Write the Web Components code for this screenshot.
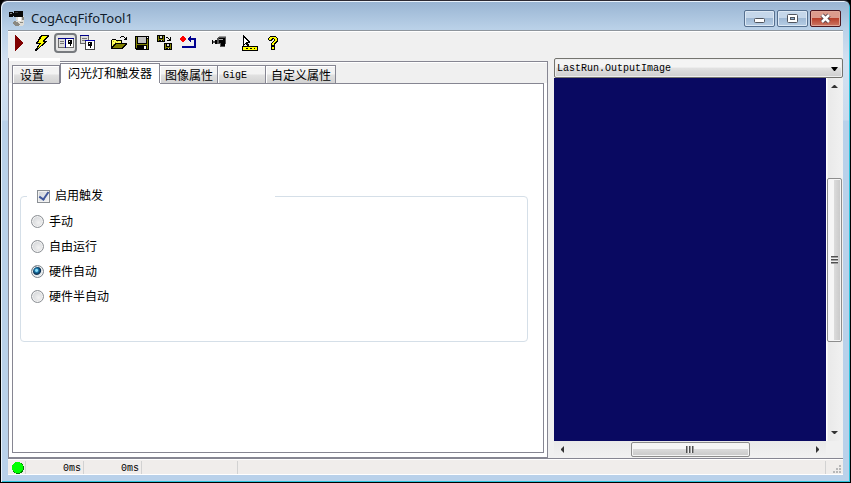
<!DOCTYPE html>
<html lang="zh-CN">
<head>
<meta charset="utf-8">
<title>CogAcqFifoTool1</title>
<style>
html,body{height:100%;margin:0;background:#000;overflow:hidden}
body{font:12px/16px "Liberation Sans","Noto Sans CJK SC",sans-serif;color:#000}
</style>
</head>
<body>
<app-window>
  <title-bar slot="title">CogAcqFifoTool1</title-bar>
  <tool-bar slot="tools"></tool-bar>
  <tab-panel slot="left"><trigger-group></trigger-group></tab-panel>
  <image-viewer slot="right"></image-viewer>
  <status-bar slot="status"></status-bar>
</app-window>
<script>
const define = (name, html, setup) => customElements.define(name, class extends HTMLElement {
  constructor() {
    super();
    this.attachShadow({mode: "open"}).innerHTML =
      `<style>*{box-sizing:border-box}button{font:inherit;color:inherit;padding:0;margin:0}</style>` + html;
    if (setup) setup.call(this, this.shadowRoot);
  }
});

define("app-window", `
<style>
:host{display:block;height:100vh}
.frame{height:100%;display:flex;flex-direction:column;box-sizing:border-box;border:1px solid #000;border-top:1px solid #2c2a33;border-radius:7px 7px 0 0;
 box-shadow:inset 1px 1px 0 #e9f2fb,inset -1px -1px 0 #2cc3dc;padding:1px 7px 7px 7px;
 background:linear-gradient(#98b4d2,#bad1e8 28px,#d3e1f1 60px,#c9dbee 119px,#b9d1ea 120px)}
.client{flex:1;min-height:0;display:grid;grid-template-columns:minmax(0,540fr) minmax(0,289fr);grid-template-rows:27px minmax(0,1fr) auto;column-gap:6px;background:#f0f0f0;border-top:1px solid #8e959d}
slot[name=tools]{display:contents}
::slotted([slot=tools]),::slotted([slot=status]){grid-column:1/-1}
</style>
<div class="frame"><slot name="title"></slot>
<div class="client"><slot name="tools"></slot><slot name="left"></slot><slot name="right"></slot><slot name="status"></slot></div></div>`);

define("title-bar", `
<style>
:host{display:flex;align-items:center;height:28px;flex:none;font:13px/20px "Noto Sans","Noto Sans CJK SC",sans-serif;color:#101c2c}
svg{width:16px;height:16px;margin:4px 6px 0 1px}
.name{flex:1;padding-top:3px}
.controls{display:flex;gap:2px;padding:5px 2px 0 0}
button{width:31px;height:17px;border:1px solid #56708f;border-radius:2px;background:linear-gradient(#c5d7ea 0 45%,#9fb9d5 50%,#b7cee5);box-shadow:inset 0 0 0 1px #dce8f4;display:grid;place-items:center}
button.close{border-color:#4d1720;background:linear-gradient(#dc9b8c 0 45%,#b8402b 50%,#cc7865);box-shadow:inset 0 0 0 1px #e0a798}
button svg{width:13px;height:11px;margin:0}
</style>
<svg viewBox="0 0 16 16" shape-rendering="crispEdges"><path d="M6 6h9v8l-2 2-6-1-2-2 3-2z" fill="#dedcd6"/><path d="M5 11l3 1 3 2-1 2H7l-3-2zM13 7h2v3h-2zM11 12h3v1h-3z" fill="#8b8982"/><path d="M9 7h3v4H9z" fill="#fff"/><path d="M0 2h4v1h1V1h9v6H5V6H4v1H0z" fill="#080808"/><path d="M1 3h2v1H1z" fill="#888"/><path d="M6 2h3v1H6z" fill="#333"/></svg>
<span class="name"><slot></slot></span>
<div class="controls">
<button aria-label="Minimize"><svg viewBox="0 0 13 11"><rect x="1.500" y="5.500" width="10" height="4" rx="1" fill="#fff" stroke="#50555e"/></svg></button>
<button aria-label="Maximize"><svg viewBox="0 0 13 11"><rect x="1.500" y="1.500" width="10" height="8" rx="1" fill="#fff" stroke="#50555e"/><rect x="4.500" y="4.500" width="4" height="2" fill="#8fb0d0" stroke="#50555e"/></svg></button>
<button class="close" aria-label="Close"><svg viewBox="0 0 13 11"><path d="M3 2l7 7M10 2l-7 7" stroke="#59434a" stroke-width="4.500"/><path d="M3 2l7 7M10 2l-7 7" stroke="#fff" stroke-width="2.500"/></svg></button>
</div>`);

define("tool-button", `
<style>
:host{display:block;width:23px;height:20px}
button{width:100%;height:100%;border:0;background:none;display:flex;align-items:center;padding:0 0 0 3px}
:host([pressed]) button{border:2px solid #777a7e;border-radius:4px;background:#e4e4e4;padding-left:2px}
::slotted(svg){width:16px;height:16px;flex:none;display:block}
</style><button><slot></slot></button>`, function (root) {
  const b = root.querySelector("button");
  b.setAttribute("aria-label", this.getAttribute("label") || "");
  if (this.hasAttribute("pressed")) b.setAttribute("aria-pressed", "true");
});

const disk = `<g transform="translate(1 1)"><path d="M0 0h14v14H1L0 13z" fill="#000"/><path d="M1 1h1v11H1zM12 3h1v10h-1zM2 8h10v1H2z" fill="#808000"/><path d="M3 1h8v6H3z" fill="#c0c0c0"/><path d="M12 1h1v1h-1zM9 10h2v3H9z" fill="#fff"/></g>`;
const smallDisk = (x, y) => `<g transform="translate(${x} ${y})"><path d="M0 0h8v7H0z" fill="#000"/><path d="M1 1h1v5H1zM6 1h1v5H6zM2 4h4v1H2z" fill="#808000"/><path d="M3 1h2v2H3zM4 5h1v1H4z" fill="#d8d8d8"/></g>`;
const icons = [
["Run", `<path d="M4 0l8 8-8 8z" fill="#800000"/>`],
["Live", `<path d="M7 0h8v1l-4 5h2v1L2 16H1v-1l4-6H2V8z" fill="#000"/><path d="M8 1h5L9 6v1h2l-7 6 3-5H4z" fill="#ff0"/>`],
["Local image", `<path d="M0 3h16v10H0z" fill="#6f6f6f"/><path d="M1 4h6v8H1z" fill="#ddd"/><path d="M0 3h16v1H0z" fill="#00008b"/><path d="M2 6h4v1H2zM2 8h4v1H2z" fill="#777"/><path d="M8 4h7v8H8z" fill="#fff"/><path d="M7 4h1v9H7z" fill="#00008b"/><path d="M10 5h4v4h-1v2h-1V9h-2z" fill="#000"/><path d="M11 6h1v1h-1z" fill="#fff"/>`, "pressed"],
["Floating image", `<path d="M0 0h9v9H0z" fill="#666"/><path d="M1 1h7v7H1z" fill="#ddd"/><path d="M0 0h9v1H0z" fill="#00008b"/><path d="M2 3h5v1H2zM2 5h4v1H2z" fill="#777"/><path d="M5 5h10v10H5z" fill="#444"/><path d="M6 6h8v8H6z" fill="#fff"/><path d="M5 5h10v1H5z" fill="#0000b0"/><path d="M8 7h4v4h-1v2h-1v-2H8z" fill="#000"/><path d="M9 8h1v1H9z" fill="#fff"/>`],
["Open", `<path d="M0 5h1V4h4v1h6v3h5v1l-4 5H0z" fill="#000"/><path d="M1 5h4v1h5v2H4l-3 4z" fill="#ff6"/><path d="M2 6h1v1H2zM4 7h1v1H4zM6 6h1v1H6zM2 9h1v1H2z" fill="#c0c000"/><path d="M5 9h9l-3 4H2z" fill="#808000"/><path d="M9 2h1V1h3v1h1v1h1V2h1v3h-3V4h1V3h-1V2h-3v1H9z" fill="#000"/>`, "", "gap"],
["Save", disk],
["Save with image", smallDisk(0,0) + smallDisk(7,8) + `<path d="M9 2h2v1h1v1h1V2h1v4h-4V5h2V4h-1V3H9z" fill="#000"/>`],
["Reset", `<path d="M2 1h2v1h1v1h1v2H5v1H4v1H2V6H1V5H0V3h1V2h1z" fill="#f00"/><path d="M7 4l4-4v3h5v10H2v-2h12V5h-3v3z" fill="#000090"/>`],
["Acquire", `<path d="M1 5h1v1h2V5h2V3l2-2h7v8h-1v3H9V9H4V8H2v1H1z" fill="#555"/><path d="M1 5h1v4H1zM4 5h2v4H4z" fill="#000"/><path d="M8 1h7v1H7z" fill="#999"/><path d="M8 3h6v8h-4V8H8z" fill="#000"/><path d="M8 4h4v1H8z" fill="#aaa"/>`, "", "gap"],
["Measure", `<path d="M1 0l7 7v1H6l2 4-2 1-2-4-3 2z" fill="#000"/><path d="M2 3l4 4H4l2 4-2-4-2 2z" fill="#fff"/><path d="M0 11h16v5H0z" fill="#000"/><path d="M1 12h14v3H1z" fill="#ff0"/><path d="M4 13h2v1H4zM8 13h2v1H8zM12 13h1v1h-1z" fill="#000"/>`, "", "gap"],
["Help", `<path d="M5 1h6v1h1v1h1v4h-1v1h-1v1h-1v2H6V8h1V7h1V6h1V4H8v1H7v1H4V5H3V3h1V2h1zM6 11h4v4H6z" fill="#000"/><path d="M5 2h6v1h1v3h-1v1h-1v1H9v2H7V8h1V7h1V6h1V4H9V3H7v1H6v1H4V3h1zM7 12h2v2H7z" fill="#ff0"/>`]
];
define("tool-bar", `
<style>:host{display:flex;align-items:center;box-sizing:border-box;background:#f0f0f0;border-top:1px solid #fff;padding-bottom:4px}.gap{margin-left:8px}</style>` +
icons.map(([n, p, pressed, gap]) => `<tool-button label="${n}" ${pressed || ""} class="${gap || ""}"><svg viewBox="0 0 16 16" shape-rendering="crispEdges">${p}</svg></tool-button>`).join(""));

define("tab-panel", `
<style>
:host{display:flex;flex-direction:column;min-width:0;min-height:0}
.top{flex:none;height:25px;display:flex;align-items:stretch;border-left:1px solid #868692;background:#f0f0f0}
.lead{width:51px;flex:none;border-top:3px solid #fff;padding-left:3px;display:flex;align-items:flex-end}
.rest{flex:1;margin-top:3px;border-top:1px solid #868692;border-right:1px solid #868692;box-shadow:inset 0 1px 0 #fff;display:flex;align-items:flex-end}
button{height:18px;border:1px solid #868692;border-bottom:0;background:linear-gradient(#f3f3f3 0 45%,#e0e0e0 55%,#d2d2d2);box-shadow:inset 1px 1px 0 #fff;line-height:20px;text-align:left;padding-left:5px;white-space:nowrap;overflow:hidden}
.lead button{width:48px;padding-left:7px}
.rest button{border-left-width:0;flex:none}
.rest .on{height:20px;width:100px;background:#fff;padding-left:7px;border-left-width:1px;box-shadow:none}
.mono{font-family:"Liberation Mono",monospace;font-size:10px}
.page{flex:1;min-height:0;border:1px solid #868692;border-top:0;background:#fff;padding:0 3px 4px}
.inner{height:100%;border:1px solid #868692;border-top:0;background:linear-gradient(#868692,#868692) 0 0/47px 1px no-repeat,linear-gradient(#868692,#868692) 147px 0/100% 1px no-repeat,#fff;padding:105px 15px 0 7px}
</style>
<div class="top" role="tablist"><div class="lead"><button role="tab">设置</button></div>
<div class="rest"><button role="tab" class="on" aria-selected="true">闪光灯和触发器</button><button role="tab" style="width:58px">图像属性</button><button role="tab" class="mono" style="width:48px">GigE</button><button role="tab" style="width:70px">自定义属性</button></div></div>
<div class="page" role="tabpanel"><div class="inner"><slot></slot></div></div>`);

define("trigger-group", `
<style>
:host{display:block}
fieldset{margin:0;border:1px solid #d5dfe8;border-radius:4px;padding:5px 0 32px 10px;min-width:0}
legend{width:248px;margin-left:-4px;padding:0 0 0 10px;height:16px}
label{display:flex;align-items:center;height:25px;gap:5px;width:max-content}
legend label{height:16px}
input{appearance:none;margin:0;width:13px;height:13px;flex:none}
input[type=checkbox]{border:1px solid #8a8f94;background:linear-gradient(135deg,#cdd2d8,#f4f4f4);box-shadow:inset 0 0 0 1px #f2f2f2;display:grid;place-items:center}
input[type=checkbox]:checked::before{content:"";width:4px;height:8px;border:solid #3f579b;border-width:0 2px 2px 0;transform:rotate(35deg);margin-top:-2px}
input[type=radio]{border:1px solid #8b8f94;border-radius:50%;background:radial-gradient(circle at 60% 60%,#f2f2f2,#c9ccd0);box-shadow:inset 0 0 0 1px #f4f4f4}
input[type=radio]:checked{background:radial-gradient(circle at 42% 40%,#8de0fa 0 1px,#1976a8 2px,#0b2c4c 4px,#dde4e9 5px);border-color:#7c858d}
</style>
<fieldset><legend><label><input type="checkbox" checked>启用触发</label></legend>
<label><input type="radio" name="m">手动</label>
<label><input type="radio" name="m">自由运行</label>
<label><input type="radio" name="m" checked>硬件自动</label>
<label><input type="radio" name="m">硬件半自动</label></fieldset>`);

define("scroll-bar", `
<style>
:host{display:flex;background:linear-gradient(#e9e9e9,#f1f1f1);min-width:0;min-height:0}
:host([vertical]){flex-direction:column;background:linear-gradient(90deg,#fff 1px,#e9e9e9 2px,#f1f1f1)}
button{flex:none;width:17px;height:17px;border:0;background:none;display:grid;place-items:center}
svg{width:7px;height:7px;display:block}
.a{flex:var(--before) 0 0}.b{flex:var(--after) 0 0}
.thumb{flex:var(--size) 0 0;border:1px solid #8d8d8d;border-radius:2px;margin:1px 0;background:linear-gradient(#f6f6f6 0 45%,#dadada 50%,#c8c8c8);box-shadow:inset 0 0 0 1px #f5f5f5;display:grid;place-items:center}
:host([vertical]) .thumb{margin:0 1px;background:linear-gradient(90deg,#f6f6f6 0 45%,#dadada 50%,#c8c8c8)}
.grip{width:8px;height:7px;background:repeating-linear-gradient(90deg,#505050 0 1px,#a0a0a0 1px 2px,#eee 2px 3px)}
:host([vertical]) .grip{width:7px;height:8px;background:repeating-linear-gradient(#505050 0 1px,#a0a0a0 1px 2px,#eee 2px 3px)}
</style>
<button aria-label="Back"><svg viewBox="0 0 7 7"><path class="p" fill="#333"/></svg></button><div class="a"></div><div class="thumb"><div class="grip"></div></div><div class="b"></div><button aria-label="Forward"><svg viewBox="0 0 7 7"><path class="p" fill="#333"/></svg></button>`, function (root) {
  const v = this.hasAttribute("vertical"), p = root.querySelectorAll(".p");
  p[0].setAttribute("d", v ? "M0 5l3-3h1l3 3z" : "M5 0L2 3v1l3 3z");
  p[1].setAttribute("d", v ? "M0 2l3 3h1l3-3z" : "M2 0l3 3v1l-3 3z");
});

define("image-viewer", `
<style>
:host{display:grid;grid-template-columns:minmax(0,1fr) 17px;grid-template-rows:20px minmax(0,1fr) 17px;min-width:0;min-height:0}
.pick{grid-column:1/-1;display:grid}
select,.pick svg{grid-area:1/1}
select{appearance:none;width:100%;height:20px;margin:0;border:1px solid #74746f;border-radius:2px;padding:2px 20px 0 2px;background:linear-gradient(#f4f4f4 0 45%,#e2e2e2 50%,#cecece);font:10px/16px "Liberation Mono",monospace;color:#000;box-shadow:inset 0 0 0 1px #eee}
.pick svg{width:7px;height:4px;justify-self:end;align-self:center;margin:1px 5px 0 0;pointer-events:none}
.image{background:#090961}
</style>
<div class="pick"><select aria-label="Image"><option>LastRun.OutputImage</option></select><svg viewBox="0 0 7 4"><path d="M0 0h7L4 4H3z"/></svg></div>
<div class="image"></div>
<scroll-bar vertical style="--before:83;--size:163;--after:83"></scroll-bar>
<scroll-bar style="--before:61;--size:117;--after:60"></scroll-bar>`);

define("status-bar", `
<style>
:host{display:flex;height:17px;box-sizing:border-box;align-items:stretch;background:#f0edeb;border-top:1px solid #868692;box-shadow:inset 0 1px 0 #fff,inset 0 -1px 0 #fff;font:10px/16px "Liberation Mono",monospace}
div{border-right:1px solid #d2d2d2;margin:2px 0 1px;line-height:16px;text-align:right}
.led{width:18px;padding:1px 0 0 4px}
.time{width:58px;padding-right:2px}
.msg{width:96px}
.fill{flex:1}
svg{width:12px;height:12px;display:block}
.grip{width:17px;border:0;display:grid;place-items:end;padding:0 2px 1px 0}
.grip svg{width:8px;height:8px}
</style>
<div class="led"><svg viewBox="0 0 12 12" shape-rendering="crispEdges"><circle cx="6" cy="6" r="6" fill="#008000"/><circle cx="5.500" cy="5.500" r="5.500" fill="#0f0"/></svg></div>
<div class="time">0ms</div><div class="time">0ms</div><div class="msg"></div><div class="fill"></div>
<div class="grip"><svg viewBox="0 0 8 8"><path d="M6 0h2v2H6zM3 3h2v2H3zM6 3h2v2H6zM0 6h2v2H0zM3 6h2v2H3zM6 6h2v2H6z" fill="#b8b8b8"/></svg></div>`);
</script>
</body>
</html>
